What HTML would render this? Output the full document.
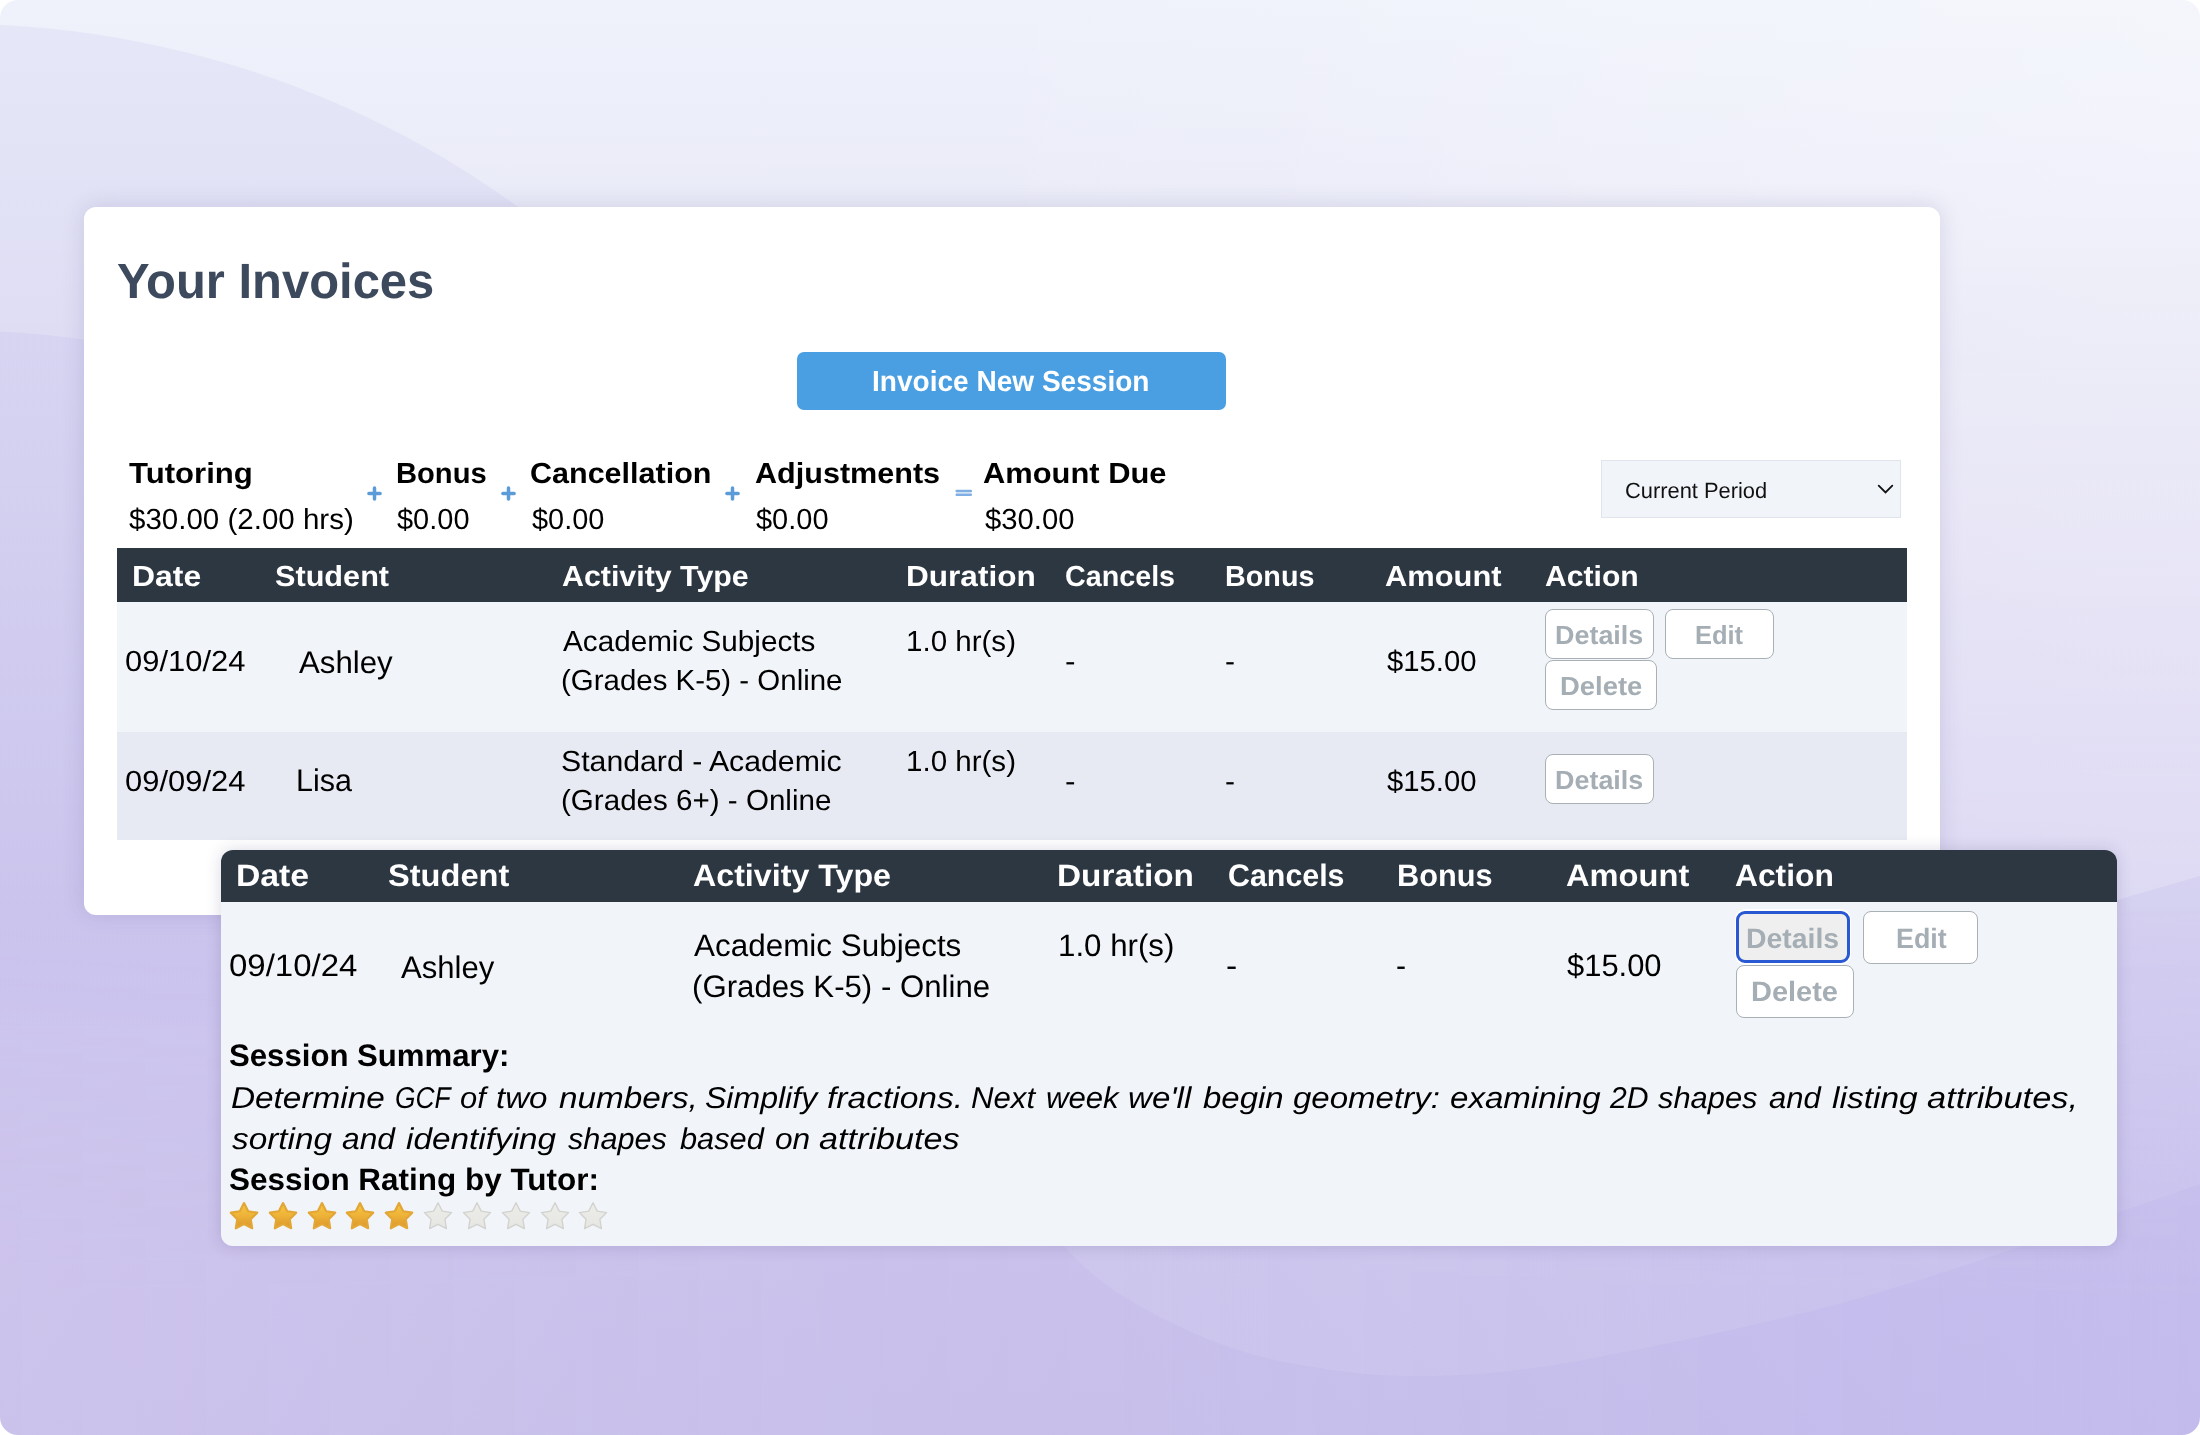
<!DOCTYPE html>
<html lang="en">
<head>
<meta charset="utf-8">
<title>Your Invoices</title>
<style>
html,body{margin:0;padding:0;background:#fff}
body{width:2200px;height:1435px}
#stage{position:relative;width:2200px;height:1435px;overflow:hidden;border-radius:18px;
  background:linear-gradient(180deg,#eff2fb 0%,#eaebf8 14.4%,#e0def4 35%,#d7d2f1 49%,#cec8ee 62.7%,#ccc5ee 70%,#cac2ec 86%,#c8c0eb 100%)}
#bg{position:absolute;left:0;top:0;width:2200px;height:1435px}
.t{position:absolute;white-space:nowrap;line-height:1;transform-origin:0 0;
  font-family:"Liberation Sans","DejaVu Sans",sans-serif;font-weight:400;color:#000;text-rendering:geometricPrecision}
.b{font-weight:700}
.i{font-style:italic}
.abs{position:absolute;box-sizing:border-box}
#card{left:84px;top:207px;width:1856px;height:707.6px;background:#fff;border-radius:12px;
  box-shadow:0 -1px 22px rgba(60,55,120,.15)}
#newbtn{left:797px;top:352px;width:429px;height:58px;background:#4a9fe2;border-radius:7px}
#period{left:1601.2px;top:460px;width:300px;height:58px;background:#f1f4f9;border:1px solid #e0e4ec}
.thead{background:#2d3742}
.r1{background:#f1f4f9}
.r2{background:#e7eaf2}
.ob{background:#fff;border:1.6px solid #a9b1b7;border-radius:8px}
#popup{left:221px;top:850.3px;width:1896px;height:395.7px;background:#f1f4f9;border-radius:12px;overflow:hidden;
  }
#popshadow{left:221px;top:850.3px;width:1896px;height:395.7px;border-radius:12px;
  box-shadow:0 0 16px rgba(40,30,90,.17)}
svg.ic{position:absolute;overflow:visible}
p.summary{margin:0;padding:0;position:static}
h1.t{margin:0}
</style>
</head>
<body>
<div id="stage">

<!-- decorative background shapes -->
<svg id="bg" viewBox="0 0 2200 1435" aria-hidden="true">
  <defs>
    <linearGradient id="gc" gradientUnits="userSpaceOnUse" x1="0" y1="0" x2="0" y2="1050">
      <stop offset="0" stop-color="#6a5fd0" stop-opacity=".07"/>
      <stop offset=".45" stop-color="#6a5fd0" stop-opacity=".06"/>
      <stop offset="1" stop-color="#6a5fd0" stop-opacity="0"/>
    </linearGradient>
    <linearGradient id="gw" gradientUnits="userSpaceOnUse" x1="0" y1="300" x2="0" y2="850">
      <stop offset="0" stop-color="#fff" stop-opacity="0"/>
      <stop offset="1" stop-color="#fff" stop-opacity=".075"/>
    </linearGradient>
    <linearGradient id="gv" gradientUnits="userSpaceOnUse" x1="0" y1="300" x2="0" y2="850">
      <stop offset="0" stop-color="#fff" stop-opacity="0"/>
      <stop offset="1" stop-color="#fff" stop-opacity=".2"/>
    </linearGradient>
    <radialGradient id="gt" gradientUnits="userSpaceOnUse" cx="2200" cy="0" r="1350">
      <stop offset="0" stop-color="#fff" stop-opacity=".34"/>
      <stop offset=".42" stop-color="#fff" stop-opacity=".22"/>
      <stop offset=".72" stop-color="#fff" stop-opacity=".06"/>
      <stop offset="1" stop-color="#fff" stop-opacity="0"/>
    </radialGradient>
    <linearGradient id="gh" gradientUnits="userSpaceOnUse" x1="0" y1="0" x2="2200" y2="0">
      <stop offset="0" stop-color="#ffe9f4" stop-opacity=".07"/>
      <stop offset=".5" stop-color="#ffe9f4" stop-opacity="0"/>
      <stop offset=".5" stop-color="#8f90ff" stop-opacity="0"/>
      <stop offset="1" stop-color="#8f90ff" stop-opacity=".09"/>
    </linearGradient>
    <linearGradient id="ghm" gradientUnits="userSpaceOnUse" x1="0" y1="900" x2="0" y2="1300">
      <stop offset="0" stop-color="#fff" stop-opacity="0"/>
      <stop offset="1" stop-color="#fff" stop-opacity="1"/>
    </linearGradient>
    <mask id="mb"><rect x="0" y="0" width="2200" height="1435" fill="url(#ghm)"/></mask>
  </defs>
  <rect x="0" y="0" width="2200" height="1435" fill="url(#gt)"/>
  <rect x="0" y="0" width="2200" height="1435" fill="url(#gh)" mask="url(#mb)"/>
  <circle cx="-45" cy="982" r="958" fill="url(#gc)"/>
  <circle cx="-52" cy="1288" r="958" fill="url(#gc)"/>
  <path d="M1064 1246 C1095 1280 1125 1300 1166 1320 C1215 1345 1262 1360 1314 1367 C1355 1374 1392 1377 1432 1376 C1490 1375 1550 1367 1609 1355 C1690 1339 1770 1322 1846 1302 C1930 1278 2005 1252 2082 1225 L2200 1184 V300 H1000 V850 Z" fill="url(#gw)"/>
  <path d="M2200 876 L2117 900 L1900 965 L1000 850 V300 H2200 Z" fill="url(#gv)"/>
</svg>

<!-- main card -->
<div id="card" class="abs" role="region" aria-label="Your Invoices"></div>
<div id="newbtn" class="abs" role="button" aria-label="Invoice New Session"></div>
<div id="period" class="abs" role="combobox" aria-label="Period"></div>
<svg class="ic" style="left:1877px;top:484px" width="17" height="11" viewBox="0 0 17 11"><path d="M1.7 1.6 L8.5 8.4 L15.3 1.6" fill="none" stroke="#111" stroke-width="1.8" stroke-linecap="round"/></svg>

<!-- summary operators -->
<svg class="ic" style="left:367.1px;top:486.1px" width="15" height="15" viewBox="0 0 15 15"><path d="M7.5 1.9V13.1M1.9 7.5H13.1" stroke="#5b9bd8" stroke-width="3.5" stroke-linecap="round"/></svg>
<svg class="ic" style="left:500.6px;top:486.1px" width="15" height="15" viewBox="0 0 15 15"><path d="M7.5 1.9V13.1M1.9 7.5H13.1" stroke="#5b9bd8" stroke-width="3.5" stroke-linecap="round"/></svg>
<svg class="ic" style="left:725.1px;top:486.1px" width="15" height="15" viewBox="0 0 15 15"><path d="M7.5 1.9V13.1M1.9 7.5H13.1" stroke="#5b9bd8" stroke-width="3.5" stroke-linecap="round"/></svg>
<svg class="ic" style="left:955px;top:489px" width="18" height="8" viewBox="0 0 18 8"><rect x="1" y="1.6" width="15.6" height="4.6" fill="#cfe1f4"/><path d="M1.5 1.9H16M1.5 5.85H16" stroke="#7eaee2" stroke-width="2.15" stroke-linecap="round"/></svg>

<!-- table -->
<div class="abs thead" style="left:117px;top:548px;width:1790px;height:53.8px"></div>
<div class="abs r1" style="left:117px;top:601.8px;width:1790px;height:130.2px"></div>
<div class="abs r2" style="left:117px;top:732px;width:1790px;height:107.5px"></div>
<div class="abs ob" style="left:1545.4px;top:609.4px;width:108.2px;height:49.6px"></div>
<div class="abs ob" style="left:1665.4px;top:609.4px;width:108.2px;height:49.6px"></div>
<div class="abs ob" style="left:1545.4px;top:660.4px;width:111.8px;height:50px"></div>
<div class="abs ob" style="left:1545.4px;top:754px;width:108.2px;height:49.6px"></div>

<h1 class="t b" style="left:116.74px;top:257.10px;font-size:49.5px;transform:scaleX(0.9887);color:#3d4a5e">Your Invoices</h1>
<span class="t b" style="left:872.41px;top:368.25px;font-size:29px;transform:scaleX(0.9672);color:#fff">Invoice New Session</span>
<strong class="t b" style="left:128.57px;top:459.50px;font-size:29px;transform:scaleX(1.0723)">Tutoring</strong>
<strong class="t b" style="left:395.56px;top:459.50px;font-size:29px;transform:scaleX(1.0054)">Bonus</strong>
<strong class="t b" style="left:530.25px;top:459.50px;font-size:29px;transform:scaleX(1.0523)">Cancellation</strong>
<strong class="t b" style="left:754.55px;top:459.50px;font-size:29px;transform:scaleX(1.0537)">Adjustments</strong>
<strong class="t b" style="left:983.44px;top:459.50px;font-size:29px;transform:scaleX(1.0642)">Amount Due</strong>
<span class="t" style="left:129.40px;top:505.75px;font-size:29px;transform:scaleX(1.0175)">$30.00 (2.00 hrs)</span>
<span class="t" style="left:397.40px;top:505.75px;font-size:29px;transform:scaleX(0.9991)">$0.00</span>
<span class="t" style="left:531.65px;top:505.75px;font-size:29px;transform:scaleX(0.9970)">$0.00</span>
<span class="t" style="left:755.90px;top:505.75px;font-size:29px;transform:scaleX(0.9991)">$0.00</span>
<span class="t" style="left:984.90px;top:505.75px;font-size:29px;transform:scaleX(1.0091)">$30.00</span>
<span class="t" style="left:1625.30px;top:479.50px;font-size:22px;transform:scaleX(0.9935);color:#111">Current Period</span>
<strong class="t b" style="left:131.69px;top:563.00px;font-size:29px;transform:scaleX(1.0996);color:#fff">Date</strong>
<strong class="t b" style="left:275.04px;top:563.00px;font-size:29px;transform:scaleX(1.0568);color:#fff">Student</strong>
<strong class="t b" style="left:561.55px;top:563.00px;font-size:29px;transform:scaleX(1.0469);color:#fff">Activity Type</strong>
<strong class="t b" style="left:905.72px;top:563.00px;font-size:29px;transform:scaleX(1.0881);color:#fff">Duration</strong>
<strong class="t b" style="left:1065.40px;top:563.00px;font-size:29px;transform:scaleX(0.9895);color:#fff">Cancels</strong>
<strong class="t b" style="left:1225.09px;top:563.00px;font-size:29px;transform:scaleX(0.9915);color:#fff">Bonus</strong>
<strong class="t b" style="left:1384.54px;top:563.00px;font-size:29px;transform:scaleX(1.0648);color:#fff">Amount</strong>
<strong class="t b" style="left:1544.56px;top:563.00px;font-size:29px;transform:scaleX(1.0384);color:#fff">Action</strong>
<span class="t" style="left:124.54px;top:648.25px;font-size:29px;transform:scaleX(1.0667)">09/10/24</span>
<span class="t" style="left:298.52px;top:647.00px;font-size:31.25px;transform:scaleX(0.9992)">Ashley</span>
<span class="t" style="left:562.97px;top:628.25px;font-size:29px;transform:scaleX(1.0233)">Academic Subjects</span>
<span class="t" style="left:560.70px;top:667.25px;font-size:29px;transform:scaleX(1.0154)">(Grades K-5) - Online</span>
<span class="t" style="left:906.02px;top:628.25px;font-size:29px;transform:scaleX(1.0185)">1.0 hr(s)</span>
<span class="t" style="left:1064.63px;top:648.25px;font-size:29px;transform:scaleX(1.0854)">-</span>
<span class="t" style="left:1224.57px;top:648.25px;font-size:29px;transform:scaleX(1.0338)">-</span>
<span class="t" style="left:1386.65px;top:648.25px;font-size:29px;transform:scaleX(1.0091)">$15.00</span>
<span class="t b" style="left:1555.03px;top:622.00px;font-size:26.25px;transform:scaleX(1.0258);color:#a5aeb4">Details</span>
<span class="t b" style="left:1694.63px;top:622.00px;font-size:26.25px;transform:scaleX(0.9701);color:#a5aeb4">Edit</span>
<span class="t b" style="left:1560.37px;top:673.00px;font-size:26.25px;transform:scaleX(1.0445);color:#a5aeb4">Delete</span>
<span class="t" style="left:124.54px;top:767.50px;font-size:29px;transform:scaleX(1.0667)">09/09/24</span>
<span class="t" style="left:296.20px;top:765.25px;font-size:31.25px;transform:scaleX(0.9751)">Lisa</span>
<span class="t" style="left:561.10px;top:747.50px;font-size:29px;transform:scaleX(1.0427)">Standard - Academic</span>
<span class="t" style="left:560.69px;top:786.50px;font-size:29px;transform:scaleX(1.0198)">(Grades 6+) - Online</span>
<span class="t" style="left:906.02px;top:747.50px;font-size:29px;transform:scaleX(1.0185)">1.0 hr(s)</span>
<span class="t" style="left:1064.63px;top:767.50px;font-size:29px;transform:scaleX(1.0854)">-</span>
<span class="t" style="left:1224.57px;top:767.50px;font-size:29px;transform:scaleX(1.0338)">-</span>
<span class="t" style="left:1386.65px;top:767.50px;font-size:29px;transform:scaleX(1.0091)">$15.00</span>
<span class="t b" style="left:1555.03px;top:766.60px;font-size:26.25px;transform:scaleX(1.0258);color:#a5aeb4">Details</span>

<!-- details popup -->
<div id="popshadow" class="abs"></div>
<div id="popup" class="abs" role="region" aria-label="Session details">
  <div class="abs thead" style="left:0;top:0;width:1896px;height:51.5px"></div>
</div>
<div class="abs" style="left:1735px;top:909.4px;width:116.4px;height:55.2px;border-radius:10px;background:#fff"></div>
<div class="abs" style="left:1736.4px;top:910.8px;width:113.6px;height:52.4px;border-radius:9px;background:#efefef;border:3.4px solid #2858d2"></div>
<div class="abs ob" style="left:1863px;top:910.6px;width:114.6px;height:53px"></div>
<div class="abs ob" style="left:1736px;top:965px;width:118.4px;height:52.6px"></div>

<strong class="t b" style="left:236.39px;top:859.75px;font-size:31px;transform:scaleX(1.0879);color:#fff">Date</strong>
<strong class="t b" style="left:388.34px;top:859.75px;font-size:31px;transform:scaleX(1.0514);color:#fff">Student</strong>
<strong class="t b" style="left:693.26px;top:859.75px;font-size:31px;transform:scaleX(1.0384);color:#fff">Activity Type</strong>
<strong class="t b" style="left:1057.21px;top:859.75px;font-size:31px;transform:scaleX(1.0748);color:#fff">Duration</strong>
<strong class="t b" style="left:1227.57px;top:859.75px;font-size:31px;transform:scaleX(0.9797);color:#fff">Cancels</strong>
<strong class="t b" style="left:1396.89px;top:859.75px;font-size:31px;transform:scaleX(0.9907);color:#fff">Bonus</strong>
<strong class="t b" style="left:1565.71px;top:859.75px;font-size:31px;transform:scaleX(1.0531);color:#fff">Amount</strong>
<strong class="t b" style="left:1735.03px;top:859.75px;font-size:31px;transform:scaleX(1.0247);color:#fff">Action</strong>
<span class="t" style="left:228.90px;top:950.25px;font-size:31px;transform:scaleX(1.0640)">09/10/24</span>
<span class="t" style="left:401.27px;top:952.00px;font-size:31.25px;transform:scaleX(0.9956)">Ashley</span>
<span class="t" style="left:693.72px;top:929.50px;font-size:31px;transform:scaleX(1.0141)">Academic Subjects</span>
<span class="t" style="left:692.33px;top:971.00px;font-size:31px;transform:scaleX(1.0061)">(Grades K-5) - Online</span>
<span class="t" style="left:1058.25px;top:929.50px;font-size:31px;transform:scaleX(1.0083)">1.0 hr(s)</span>
<span class="t" style="left:1225.66px;top:950.25px;font-size:31px;transform:scaleX(1.0832)">-</span>
<span class="t" style="left:1396.20px;top:950.25px;font-size:31px;transform:scaleX(0.9707)">-</span>
<span class="t" style="left:1566.75px;top:950.25px;font-size:31px;transform:scaleX(0.9971)">$15.00</span>
<span class="t b" style="left:1746.10px;top:924.60px;font-size:28px;transform:scaleX(1.0139);color:#a5aeb4">Details</span>
<span class="t b" style="left:1895.50px;top:924.60px;font-size:28px;transform:scaleX(0.9578);color:#a5aeb4">Edit</span>
<span class="t b" style="left:1751.05px;top:978.00px;font-size:28px;transform:scaleX(1.0345);color:#a5aeb4">Delete</span>
<strong class="t b" style="left:229.18px;top:1039.60px;font-size:31px;transform:scaleX(1.0045)">Session Summary:</strong>
<p class="summary">
<em class="t i" style="left:230.54px;top:1083.50px;font-size:30px;transform:scaleX(1.1110)">Determine </em>
<em class="t i" style="left:394.54px;top:1083.50px;font-size:30px;transform:scaleX(0.8777)">GCF </em>
<em class="t i" style="left:460.41px;top:1083.50px;font-size:30px;transform:scaleX(1.0284)">of </em>
<em class="t i" style="left:496.14px;top:1083.50px;font-size:30px;transform:scaleX(1.1023)">two </em>
<em class="t i" style="left:558.71px;top:1083.50px;font-size:30px;transform:scaleX(1.1100)">numbers, </em>
<em class="t i" style="left:705.40px;top:1083.50px;font-size:30px;transform:scaleX(1.0679)">Simplify </em>
<em class="t i" style="left:827.20px;top:1083.50px;font-size:30px;transform:scaleX(1.1180)">fractions. </em>
<em class="t i" style="left:970.64px;top:1083.50px;font-size:30px;transform:scaleX(1.0395)">Next </em>
<em class="t i" style="left:1045.95px;top:1083.50px;font-size:30px;transform:scaleX(1.0377)">week </em>
<em class="t i" style="left:1128.19px;top:1083.50px;font-size:30px;transform:scaleX(1.1021)">we'll </em>
<em class="t i" style="left:1202.65px;top:1083.50px;font-size:30px;transform:scaleX(1.0985)">begin </em>
<em class="t i" style="left:1292.90px;top:1083.50px;font-size:30px;transform:scaleX(1.1010)">geometry: </em>
<em class="t i" style="left:1449.68px;top:1083.50px;font-size:30px;transform:scaleX(1.1022)">examining </em>
<em class="t i" style="left:1610.09px;top:1083.50px;font-size:30px;transform:scaleX(1.0054)">2D </em>
<em class="t i" style="left:1658.26px;top:1083.50px;font-size:30px;transform:scaleX(1.0284)">shapes </em>
<em class="t i" style="left:1768.59px;top:1083.50px;font-size:30px;transform:scaleX(1.0329)">and </em>
<em class="t i" style="left:1831.51px;top:1083.50px;font-size:30px;transform:scaleX(1.1175)">listing </em>
<em class="t i" style="left:1926.73px;top:1083.50px;font-size:30px;transform:scaleX(1.1463)">attributes, </em>
<em class="t i" style="left:231.69px;top:1124.75px;font-size:30px;transform:scaleX(1.1108)">sorting </em>
<em class="t i" style="left:341.81px;top:1124.75px;font-size:30px;transform:scaleX(1.0567)">and </em>
<em class="t i" style="left:406.25px;top:1124.75px;font-size:30px;transform:scaleX(1.1113)">identifying </em>
<em class="t i" style="left:568.27px;top:1124.75px;font-size:30px;transform:scaleX(1.0229)">shapes </em>
<em class="t i" style="left:679.74px;top:1124.75px;font-size:30px;transform:scaleX(1.0256)">based </em>
<em class="t i" style="left:774.88px;top:1124.75px;font-size:30px;transform:scaleX(1.0554)">on </em>
<em class="t i" style="left:819.26px;top:1124.75px;font-size:30px;transform:scaleX(1.1399)">attributes </em>
</p>
<strong class="t b" style="left:229.16px;top:1164.00px;font-size:31px;transform:scaleX(1.0146)">Session Rating by Tutor:</strong>

<!-- rating stars -->
<svg width="0" height="0" style="position:absolute"><defs><linearGradient id="sg" x1="0" y1="0" x2="0" y2="1"><stop offset="0" stop-color="#f6c744"/><stop offset=".45" stop-color="#efb539"/><stop offset="1" stop-color="#dc952a"/></linearGradient><linearGradient id="se" x1="0" y1="0" x2="0" y2="1"><stop offset="0" stop-color="#ecece9"/><stop offset="1" stop-color="#e6e6e3"/></linearGradient></defs></svg>
<svg class="ic" style="left:227.80px;top:1201.3px" width="32" height="32" viewBox="0 0 32 32"><path d="M16.00 2.10 L20.17 10.26 L29.22 11.70 L22.75 18.19 L24.17 27.25 L16.00 23.10 L7.83 27.25 L9.25 18.19 L2.78 11.70 L11.83 10.26Z" fill="url(#sg)" stroke="#e2a736" stroke-width="2.2" stroke-linejoin="round"/></svg>
<svg class="ic" style="left:266.65px;top:1201.3px" width="32" height="32" viewBox="0 0 32 32"><path d="M16.00 2.10 L20.17 10.26 L29.22 11.70 L22.75 18.19 L24.17 27.25 L16.00 23.10 L7.83 27.25 L9.25 18.19 L2.78 11.70 L11.83 10.26Z" fill="url(#sg)" stroke="#e2a736" stroke-width="2.2" stroke-linejoin="round"/></svg>
<svg class="ic" style="left:305.50px;top:1201.3px" width="32" height="32" viewBox="0 0 32 32"><path d="M16.00 2.10 L20.17 10.26 L29.22 11.70 L22.75 18.19 L24.17 27.25 L16.00 23.10 L7.83 27.25 L9.25 18.19 L2.78 11.70 L11.83 10.26Z" fill="url(#sg)" stroke="#e2a736" stroke-width="2.2" stroke-linejoin="round"/></svg>
<svg class="ic" style="left:344.35px;top:1201.3px" width="32" height="32" viewBox="0 0 32 32"><path d="M16.00 2.10 L20.17 10.26 L29.22 11.70 L22.75 18.19 L24.17 27.25 L16.00 23.10 L7.83 27.25 L9.25 18.19 L2.78 11.70 L11.83 10.26Z" fill="url(#sg)" stroke="#e2a736" stroke-width="2.2" stroke-linejoin="round"/></svg>
<svg class="ic" style="left:383.20px;top:1201.3px" width="32" height="32" viewBox="0 0 32 32"><path d="M16.00 2.10 L20.17 10.26 L29.22 11.70 L22.75 18.19 L24.17 27.25 L16.00 23.10 L7.83 27.25 L9.25 18.19 L2.78 11.70 L11.83 10.26Z" fill="url(#sg)" stroke="#e2a736" stroke-width="2.2" stroke-linejoin="round"/></svg>
<svg class="ic" style="left:422.05px;top:1201.3px" width="32" height="32" viewBox="0 0 32 32"><path d="M16.00 1.70 L20.29 10.09 L29.60 11.58 L22.94 18.26 L24.41 27.57 L16.00 23.30 L7.59 27.57 L9.06 18.26 L2.40 11.58 L11.71 10.09Z" fill="url(#se)" stroke="#d2d2cf" stroke-width="1.4" stroke-linejoin="round"/></svg>
<svg class="ic" style="left:460.90px;top:1201.3px" width="32" height="32" viewBox="0 0 32 32"><path d="M16.00 1.70 L20.29 10.09 L29.60 11.58 L22.94 18.26 L24.41 27.57 L16.00 23.30 L7.59 27.57 L9.06 18.26 L2.40 11.58 L11.71 10.09Z" fill="url(#se)" stroke="#d2d2cf" stroke-width="1.4" stroke-linejoin="round"/></svg>
<svg class="ic" style="left:499.75px;top:1201.3px" width="32" height="32" viewBox="0 0 32 32"><path d="M16.00 1.70 L20.29 10.09 L29.60 11.58 L22.94 18.26 L24.41 27.57 L16.00 23.30 L7.59 27.57 L9.06 18.26 L2.40 11.58 L11.71 10.09Z" fill="url(#se)" stroke="#d2d2cf" stroke-width="1.4" stroke-linejoin="round"/></svg>
<svg class="ic" style="left:538.60px;top:1201.3px" width="32" height="32" viewBox="0 0 32 32"><path d="M16.00 1.70 L20.29 10.09 L29.60 11.58 L22.94 18.26 L24.41 27.57 L16.00 23.30 L7.59 27.57 L9.06 18.26 L2.40 11.58 L11.71 10.09Z" fill="url(#se)" stroke="#d2d2cf" stroke-width="1.4" stroke-linejoin="round"/></svg>
<svg class="ic" style="left:577.45px;top:1201.3px" width="32" height="32" viewBox="0 0 32 32"><path d="M16.00 1.70 L20.29 10.09 L29.60 11.58 L22.94 18.26 L24.41 27.57 L16.00 23.30 L7.59 27.57 L9.06 18.26 L2.40 11.58 L11.71 10.09Z" fill="url(#se)" stroke="#d2d2cf" stroke-width="1.4" stroke-linejoin="round"/></svg>

</div>
</body>
</html>
